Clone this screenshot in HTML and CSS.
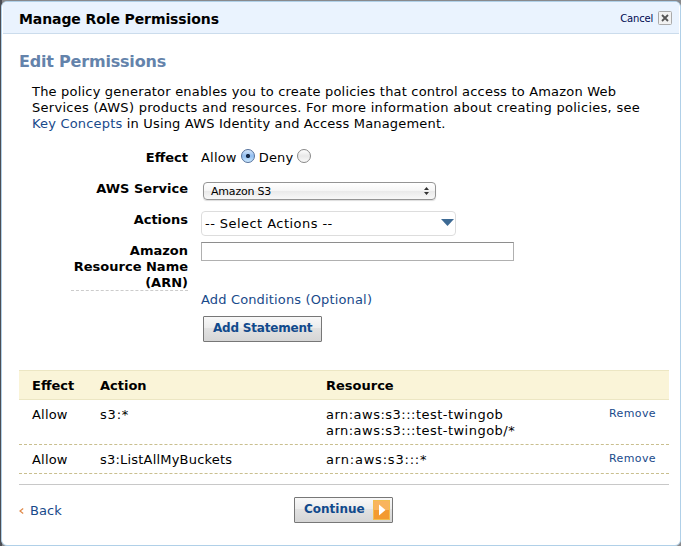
FILE: index.html
```html
<!DOCTYPE html>
<html lang="en">
<head>
<meta charset="utf-8">
<title>Manage Role Permissions</title>
<link rel="stylesheet" href="styles.css">
</head>
<body>
<div class="dialog">
  <header class="titlebar">
    <h1><span>Manage Role Permissions</span></h1>
    <div class="cancel"><span>Cancel</span>
      <svg width="14" height="14" viewBox="0 0 14 14"><rect x=".5" y=".5" width="13" height="13" rx="1" fill="#f2f2f2" stroke="#aaa"/><path d="M4 4l6 6M10 4l-6 6" stroke="#555" stroke-width="1.8"/></svg>
    </div>
  </header>
  <main>
    <h2><span>Edit Permissions</span></h2>
    <p class="intro"><span class="l1">The policy generator enables you to create policies that control access to Amazon Web</span><br><span class="l2">Services (AWS) products and resources. For more information about creating policies, see</span><br><span class="l3"><a>Key Concepts</a> in Using AWS Identity and Access Management.</span></p>
    <div class="form">
      <div class="row effect"><label><span>Effect</span></label>
        <div class="field radios"><span>Allow</span><i class="radio on"></i><span>Deny</span><i class="radio"></i></div></div>
      <div class="row service"><label><span>AWS Service</span></label>
        <div class="field select"><span>Amazon S3</span><svg width="5" height="8" viewBox="0 0 5 8"><path d="M0 3L2.5 0L5 3zM0 5L2.5 8L5 5z" fill="#333"/></svg></div></div>
      <div class="row actions"><label><span>Actions</span></label>
        <div class="field dropdown"><span>-- Select Actions --</span><svg width="13" height="7" viewBox="0 0 13 7"><path d="M0 0H13L6.5 7z" fill="#3d6a94"/></svg></div></div>
      <div class="row arn"><label><span>Amazon</span><br><span>Resource Name</span><br><span>(ARN)</span></label>
        <div class="field input"></div></div>
    </div>
    <a class="conditions"><span>Add Conditions (Optional)</span></a>
    <div class="button add"><span>Add Statement</span></div>
    <div class="table">
      <div class="tr head"><span class="b">Effect</span><span class="b">Action</span><span class="b">Resource</span></div>
      <div class="tr first"><span>Allow</span><span class="wide">s3:*</span><span class="resource">arn:aws:s3:::test-twingob<br>arn:aws:s3:::test-twingob/*</span><a>Remove</a></div>
      <div class="tr second"><span>Allow</span><span>s3:ListAllMyBuckets</span><span class="wide">arn:aws:s3:::*</span><a>Remove</a></div>
    </div>
    <footer>
      <a class="back"><svg width="5" height="6" viewBox="0 0 5 6"><path d="M4.2 .5L1 3l3.2 2.5" fill="none" stroke="#e08a4a" stroke-width="1.2"/></svg><span>Back</span></a>
      <div class="button continue"><span>Continue</span><svg width="17" height="20" viewBox="0 0 17 20"><rect width="17" height="20" fill="#f2bd4e"/><rect x="1" y="1" width="15" height="9" fill="#f9b45d"/><rect x="1" y="10" width="15" height="9" fill="#f39a30"/><path d="M6 4.5L12.5 10L6 15.5z" fill="#fff"/></svg></div>
    </footer>
  </main>
</div>
</body>
</html>
```
FILE: styles.css
```css
* { box-sizing: border-box; }
body {
  margin: 0; height: 546px; overflow: hidden; padding: 1px 0 0 1px;
  background: linear-gradient(90deg, #4c4e55 0 2px, #88898c 2px);
  font: 13px/16px "DejaVu Sans", Verdana, sans-serif; color: #000;
}
h1, h2, p { margin: 0; }
a { color: #194a8b; }
svg { display: block; flex: none; }
.dialog { width: 680px; height: 545px; background: #fff; border: 1px solid #b0d0e8; border-radius: 6px; overflow: hidden; }
.titlebar { height: 32px; margin: 0 1px; padding: 0 7px 0 16px; display: flex; align-items: center; justify-content: space-between; background: #eaf3fe; border-bottom: 1px solid #cbdcec; }
h1 { font-size: 14px; line-height: 16px; padding-top: 3px; letter-spacing: -.1px; }
.cancel { display: flex; align-items: center; gap: 5px; font-size: 10px; letter-spacing: -.2px; color: #000a52; padding-top: 1px; }
.cancel span { padding-top: 2px; }
main { padding: 0 11px 0 17px; }
h2 { padding-top: 18px; font-size: 16px; line-height: 20px; letter-spacing: -.2px; color: #6483ab; }
.intro { padding: 12px 0 0 13px; height: 60px; white-space: nowrap; }
.l1 { letter-spacing: .195px; }
.l2 { letter-spacing: .275px; }
.l3 { letter-spacing: .18px; }
.form { padding-top: 17px; }
.row { display: flex; height: 31px; }
.row label { width: 117px; margin: 0 13px 0 52px; padding-top: 1px; text-align: right; font-weight: bold; white-space: nowrap; line-height: 16px; }
.radios { display: flex; height: 16px; padding-top: 1px; letter-spacing: .2px; }
.radio { width: 14px; height: 14px; margin: -1px 4px 0; border: 1px solid #888; border-radius: 50%; background: linear-gradient(#fff, #e8e8e8 50%, #fafafa); }
.radio.on { border-color: #53709b; background: radial-gradient(circle, #172a48 0 1.8px, transparent 2.4px), linear-gradient(#d5e6fa, #90bdf0 50%, #cdeaff); }
.select { width: 233px; height: 18px; margin: 2px 0 0 2px; padding: 0 6px 0 7px; display: flex; align-items: center; justify-content: space-between; border: 1px solid #949494; border-radius: 4px; background: linear-gradient(#fff, #f5f5f5 50%, #e9e9e9 50%, #f8f8f8); font-size: 11px; letter-spacing: -.2px; box-shadow: 0 1px 1px #ddd; }
.select span { padding-top: 1px; }
.dropdown { width: 255px; height: 25px; padding: 0 1px 0 3px; display: flex; align-items: center; justify-content: space-between; border: 1px solid #ddd; border-radius: 4px; letter-spacing: .45px; }
.dropdown svg { margin-bottom: 2px; }
.row.arn { height: 49px; }
.arn label { border-bottom: 1px dashed #ccc; }
.input { width: 313px; height: 19px; border: 1px solid #b0b0b0; border-top-color: #8e8e8e; }
.conditions { display: block; padding: 1px 0 0 182px; height: 17px; letter-spacing: .15px; }
.button { display: flex; align-items: center; border: 1px solid #777; border-radius: 1px; background: linear-gradient(#f8f8f8, #ececec 45%, #e2e2e2 46%, #d5d5d5); color: #114a8c; font-weight: bold; font-size: 12px; white-space: nowrap; }
.add { width: 119px; height: 26px; margin: 8px 0 0 184px; padding: 0 0 3px 9px; letter-spacing: -.2px; }
.table { margin-top: 28px; }
.tr { display: grid; grid-template-columns: 68px 226px 283px 60px; padding-left: 13px; border-bottom: 1px dashed #c9bf8f; letter-spacing: .2px; }
.tr a { font-size: 11px; line-height: 14px; letter-spacing: .4px; }
.resource { letter-spacing: .48px; }
.wide { letter-spacing: .8px; }
.head { height: 30px; padding-top: 7px; background: #faf4d8; border: solid #ece6c3; border-width: 1px 0; font-weight: bold; letter-spacing: 0; }
.first { height: 45px; padding-top: 7px; }
.second { height: 29px; padding-top: 7px; }
footer { margin-top: 10px; padding-top: 12px; border-top: 1px solid #c8c8c8; display: flex; height: 50px; }
.back { display: flex; width: 275px; gap: 6px; padding-top: 6px; letter-spacing: .1px; }
.back svg { margin-top: 5px; }
.continue { width: 99px; height: 26px; padding: 0 2px 0 9px; justify-content: space-between; }
.continue span { padding-bottom: 2px; }
```
